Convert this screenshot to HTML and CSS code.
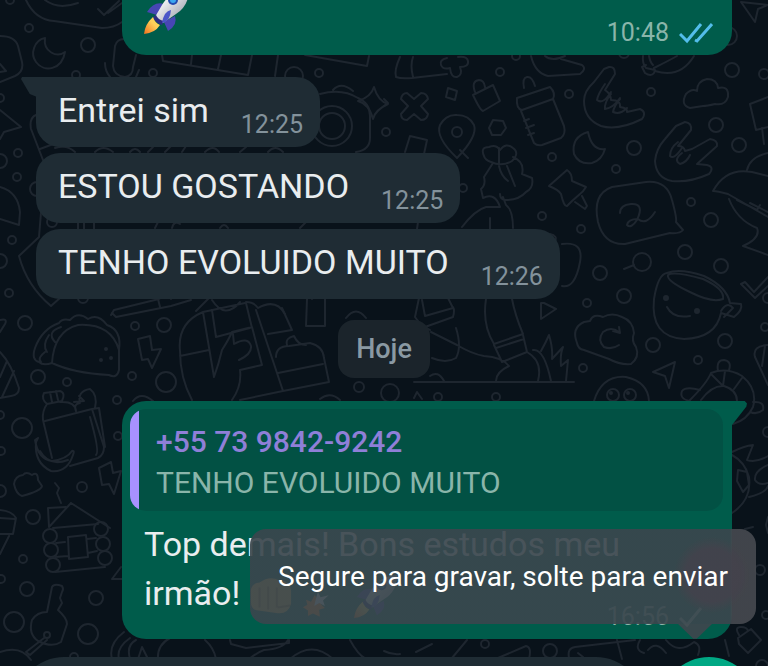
FILE: index.html
```
<!DOCTYPE html>
<html lang="pt-BR">
<head>
    <meta charset="utf-8">
    <meta name="viewport" content="width=device-width, initial-scale=1.0">
    <title>Conversa</title>
    <link rel="stylesheet" href="styles.css">
</head>
<body>
    <!-- Doodle wallpaper -->
    <svg class="wallpaper" width="768" height="666" viewBox="0 0 768 666" aria-hidden="true">
        <!-- loose circles -->
        <g>
            <circle cx="29" cy="28" r="4"/><circle cx="10" cy="0" r="4"/><circle cx="88" cy="45" r="7"/><circle cx="76" cy="75" r="4"/>
            <circle cx="153" cy="73" r="4"/><circle cx="0" cy="98" r="4"/><circle cx="18" cy="153" r="4"/><circle cx="0" cy="161" r="7"/>
            <circle cx="17" cy="177" r="4"/><circle cx="37" cy="189" r="7"/><circle cx="12" cy="240" r="4"/><circle cx="0" cy="261" r="7"/>
            <circle cx="9" cy="293" r="4"/><circle cx="52" cy="222" r="5"/><circle cx="83" cy="298" r="5"/><circle cx="25" cy="323" r="7"/>
            <circle cx="135" cy="326" r="4"/><circle cx="164" cy="325" r="7"/><circle cx="38" cy="377" r="7"/><circle cx="67" cy="382" r="4"/>
            <circle cx="132" cy="376" r="4"/><circle cx="166" cy="382" r="10"/><circle cx="117" cy="400" r="4"/><circle cx="22" cy="428" r="10"/>
            <circle cx="118" cy="436" r="4"/><circle cx="0" cy="415" r="4"/><circle cx="1" cy="451" r="4"/><circle cx="0" cy="491" r="6"/>
            <circle cx="82" cy="487" r="5"/><circle cx="33" cy="517" r="7"/><circle cx="23" cy="559" r="4"/><circle cx="1" cy="579" r="4"/>
            <circle cx="27" cy="589" r="7"/><circle cx="96" cy="598" r="7"/><circle cx="14" cy="622" r="10"/><circle cx="88" cy="634" r="10"/>
            <circle cx="74" cy="657" r="4"/><circle cx="294" cy="76" r="9"/><circle cx="319" cy="73" r="4"/>
            <circle cx="386" cy="132" r="4"/><circle cx="500" cy="72" r="4"/><circle cx="516" cy="56" r="4"/><circle cx="569" cy="94" r="4"/>
            <circle cx="651" cy="92" r="4"/><circle cx="732" cy="70" r="7"/><circle cx="764" cy="74" r="5"/><circle cx="716" cy="125" r="7"/>
            <circle cx="739" cy="145" r="7"/><circle cx="634" cy="148" r="7"/><circle cx="624" cy="53" r="5"/><circle cx="728" cy="36" r="9"/>
            <circle cx="552" cy="157" r="4"/><circle cx="616" cy="169" r="4"/><circle cx="542" cy="216" r="4"/><circle cx="581" cy="229" r="4"/>
            <circle cx="691" cy="202" r="4"/><circle cx="711" cy="220" r="7"/><circle cx="685" cy="252" r="7"/><circle cx="721" cy="266" r="7"/>
            <circle cx="600" cy="273" r="7"/><circle cx="624" cy="296" r="7"/><circle cx="587" cy="303" r="4"/><circle cx="642" cy="262" r="9"/>
            <circle cx="463" cy="188" r="4"/><circle cx="768" cy="298" r="5"/><circle cx="583" cy="368" r="4"/><circle cx="653" cy="345" r="7"/>
            <circle cx="725" cy="341" r="7"/><circle cx="698" cy="360" r="4"/><circle cx="765" cy="327" r="4"/>
            <circle cx="438" cy="397" r="4"/><circle cx="496" cy="397" r="4"/><circle cx="390" cy="393" r="9"/>
            <circle cx="768" cy="432" r="5"/><circle cx="760" cy="570" r="5"/><circle cx="766" cy="615" r="4"/><circle cx="485" cy="644" r="4"/>
            <circle cx="550" cy="651" r="7"/><circle cx="762" cy="666" r="6"/><circle cx="359" cy="387" r="5"/>
        </g>
        <!-- top left: bubble, moon, microphone -->
        <path d="M26 0C32 13 41 20 54 21L102 28Q114 28 122 22M45 0Q58 10 78 3M98 9l6 6 15-14M108 13l14-10"/>
        <path d="M45 38C34 40 30 54 36 62C44 73 62 70 65 52C57 58 43 52 45 38Z"/>
        <path d="M0 36Q15 36 18 46L22 62Q24 72 15 76L0 82M0 64l6 7-6 1M115 46Q117 39 124 39M115 46l-2 20q1 10 12 11q8-1 8-10l3-12M105 63q0 8 5 14M139 70l-3 7"/>
        <path d="M0 110L21 127L4 132L0 139M0 187Q18 192 20 212L19 225L0 219"/>
        <path d="M36 115Q29 118 31 129L43 160M40 149l16-6M42 200L39 237L19 256Q27 286 51 306L61 297"/>
        <!-- keyboard strip and camera -->
        <path d="M162 55l1 6 85 14 4-20M192 55l-1 9M221 55l-3 14M278 55l-3 21M305 55l62 11 2-10M320 94q22-6 38 4q12 5 12 18v22q0 12-14 14M333 90q8-9 20 1"/>
        <circle cx="332" cy="126" r="20"/><circle cx="332" cy="126" r="13"/>
        <path d="M374 87q4 14 14 17q-13 6-15 15q-4-15-15-18q13-4 16-14Z"/>
        <path d="M384 106l4-3-4-4"/>
        <!-- gaps between the incoming bubbles -->
        <path d="M55 148q12-4 20 4M95 152q8-8 18 0M130 152q5-6 10 0M148 152l5-5M165 152l6-6M182 152l4-6M205 152q8-8 14 0M240 152l6-5M268 152q7-8 15 0M78 222v7M84 222v7M94 222v7M155 228l3-6M172 228q2-8 8-4M220 228q4-6 8 0M300 228l6-6M418 222l-1 7"/>
        <!-- shoe, cross, lock, bottle -->
        <path d="M400 57Q394 70 396 77Q401 79 412 78L447 74M413 57q-3 8 0 20M447 58q-8 2-6 7q2 5 9 3q1 10 7 9q6-2 3-10q9 0 8-6q-1-5-10-4"/>
        <path d="M407 93L414 99L421 93Q427 93 428 99L421 106L428 114Q427 120 421 120L414 114L407 120Q401 120 401 114L408 106L401 99Q402 93 407 93Z"/>
        <path d="M448 88l9 3-2 9-9-3ZM473 95l20-10 7 16-17 10q-3-1-10-16ZM475 92q-4-11 4-12q5 0 6 7"/>
        <path d="M524 88q-2-10 3-11q5-1 8 9M517 98L550 87Q556 93 553 99L522 110Q516 109 517 98ZM521 111L534 143Q537 146 542 145L561 138Q566 134 564 126L553 99M524 121l5-2M526 128l8-3M528 135l6-2"/>
        <path d="M531 56Q535 73 548 76L580 74Q587 69 582 65L561 59M545 56q7 6 20 0"/>
        <!-- pin, nut, hands, moon, cloud -->
        <path d="M457 158Q435 137 440 125Q446 114 457 115Q469 115 474 125Q478 136 457 158Z"/><circle cx="457" cy="132" r="5"/>
        <path d="M493 120l10 1 3 7-5 7h-9l-3-7ZM410 136l17 4-3 14M410 136l-5 16"/>
        <path d="M609 67Q615 66 615 74L605 90Q611 94 611 100Q621 100 620 107Q628 108 627 112L640 109Q647 112 642 119Q618 131 601 126Q584 119 584 101Q584 91 594 82L604 69ZM605 84Q598 94 597 100Q603 105 611 92M611 94Q604 103 605 109Q613 108 620 98M620 99Q614 106 613 112Q620 115 627 108"/>
        <path d="M685 122Q692 123 691 130L678 146Q684 146 685 151L692 149L710 139Q718 140 717 146L697 164L707 165Q715 167 709 174Q689 183 672 181Q656 178 655 161Q656 149 665 139L676 126ZM678 142Q670 148 670 156Q674 160 682 148M682 153q-9 7-2 11q7-2 10-9"/>
        <path d="M588 132Q571 137 574 154Q579 165 592 163Q602 160 605 149Q592 151 588 132Z"/>
        <path d="M643 56Q642 63 646 68L655 70L654 73Q651 77 645 73L642 67L646 65M649 56q1 6 4 9M654 68Q670 60 677 56M655 71Q680 79 694 56"/>
        <path d="M690 108Q680 105 686 94Q692 88 697 91Q697 81 707 79Q717 79 718 88Q729 85 728 97Q725 106 715 104Q707 106 703 106Z"/>
        <path d="M741 2L768 5L758 9L755 22ZM768 97L750 104L756 130L768 127M762 128l2 16"/>
        <!-- woman -->
        <path d="M484 156Q480 147 489 147Q496 144 500 150Q506 142 513 148Q520 153 512 161Q502 167 491 162Q485 160 484 156ZM499 148v15M513 157Q525 162 522 174L532 178Q534 188 526 192Q519 200 506 200Q500 200 500 194M493 163L484 177Q486 185 481 189L483 198Q495 192 500 207H486Q475 210 462 227M499 166q2 10 9 15M507 166l8 20M503 197l3 8Q513 210 513 228M490 218v12M550 234q8 2 5 7M562 244Q584 241 580 262Q575 289 562 286M460 150l8 8"/>
        <!-- pushpin, speech bubble, mushroom -->
        <path d="M567 170L549 186Q559 190 561 194Q564 207 567 206L572 201L580 194Q583 192 586 187L572 181Q572 173 567 170ZM575 202l10 7 2-3-5-10"/>
        <path d="M612 187L646 182Q667 180 672 200Q677 218 676 222L683 230Q680 234 670 233L625 244Q604 245 598 222Q592 194 612 187ZM620 213Q620 205 631 204Q645 203 637 220Q631 229 627 225Q628 219 638 219Q646 226 655 212"/>
        <path d="M713 191Q726 167 752 172L768 176M713 191Q717 191 728 194L768 217M747 170Q750 157 768 153M729 199Q737 220 757 228Q761 238 743 246L768 255M737 200l20 10 3-5M750 203l18 9M624 269l10-4"/>
        <!-- smiling cup, tick -->
        <path d="M668 275Q674 271 703 279Q725 289 723 299Q712 303 692 293Q666 281 668 275ZM667 273Q658 274 654 299Q650 337 684 339Q716 338 721 313L734 317Q743 310 741 304L730 303M667 273Q680 268 704 276Q727 287 730 303M721 311Q727 301 733 308L724 317M667 307Q673 319 690 316"/>
        <circle class="dot" cx="666" cy="298" r="2"/><circle class="dot" cx="697" cy="311" r="2"/>
        <path d="M741 284l4-2 9 10 14-15M741 284l14 14 13-12M541 303l3 0 12 6-15 10Z"/>
        <!-- taco and rocket corner -->
        <path d="M39 362Q31 360 35 348Q42 329 59 323Q62 318 70 320Q78 311 88 319Q98 313 107 325Q122 330 119 350L119 370Q117 379 109 375Q73 373 52 363Q43 366 39 362ZM52 363Q54 331 78 325Q111 323 119 350M55 342q-9-10 6-15M49 335q-7 10-2 17M45 352q-8 6-4 10"/>
        <circle class="dot" cx="106" cy="349" r="1"/><circle class="dot" cx="101" cy="360" r="1"/><circle class="dot" cx="111" cy="358" r="1"/>
        <path d="M0 320q8-2 5 4L0 332M0 352Q11 363 19 388Q19 395 11 396L0 398M7 361L0 377M14 371L2 397M111 315l3-5 45-11q10-7 12 0M112 313l4 4 55-11 20-6M158 299l2 8"/>
        <path d="M138 339l12-3 2 14 9-1-9 19-4-9-6 1Z"/>
        <!-- penguin and boxes -->
        <path d="M192 400Q180 378 180 351Q177 323 203 312L245 303M203 312L214 377Q219 363 222 350Q229 339 232 332L252 327L262 365L240 370Q242 386 232 400M180 356L209 350M212 310L216 337L246 329L250 328M212 300Q225 320 240 302M233 334l1 10Q248 336 251 346Q252 354 239 360M246 303l6 25M256 310L283 391L240 400M282 308L292 330L268 334M276 357Q276 346 289 346L310 343Q323 346 324 358L329 382L283 391M278 373L323 364M287 345Q285 338 294 336Q298 345 306 345M307 299l-1 27h19v-27M312 299v-6M346 318q10-13 20 0"/>
        <path d="M320 399q10-8 20 1M133 401q8-10 20 0M246 302q8 0 12 6q18-10 27 6M196 311l14-14"/>
        <!-- walking legs, grass, cloud -->
        <path d="M419 298L415 317L421 325L430 330M422 300l3 16 28-8-5-10M425 327l28-10q2-7 0-10M456 328Q462 347 456 358Q446 364 432 358M431 332l26 13Q472 354 484 356Q502 357 509 366Q496 372 496 381M486 299Q482 325 494 344L523 334Q515 315 512 299M494 345l8 17 25-10-4-17M496 348l28-9M527 352Q543 361 538 381M533 350Q544 348 551 381M541 351Q546 342 549 335Q553 348 552 359L563 347Q560 354 561 366L568 360L566 381M414 382H574M430 376Q438 370 444 381M414 398l3-6 5 7"/>
        <path d="M577 343Q571 328 584 322L590 321Q593 313 603 317Q612 312 622 317Q633 321 634 333Q631 341 636 347Q640 357 631 364Q620 365 609 359L584 350Q578 349 577 343ZM619 332Q611 326 603 332Q597 340 604 347Q612 350 619 345M613 331l7 2-1-6"/>
        <path d="M675 362L653 372L665 376L669 388ZM594 401Q602 375 626 377Q648 382 649 401"/>
        <circle cx="613" cy="395" r="6"/><circle cx="630" cy="395" r="6"/><circle class="dot" cx="611" cy="393" r="1"/><circle class="dot" cx="628" cy="393" r="1"/>
        <!-- turtle, cone and ball on the right -->
        <path d="M690 400Q707 383 711 373Q727 367 742 376Q758 389 753 407Q747 420 733 424M701 400Q712 385 724 386Q737 390 737 401M711 374l12 12M725 371l-2 15M742 378l-8 11M718 371Q716 360 724 360Q732 361 729 370M690 401Q679 399 682 391Q686 386 700 390M753 402Q765 401 763 410Q757 415 750 412M768 345Q752 346 755 357L768 385M765 346l-3 20"/>
        <path d="M732 452Q744 446 753 445L747 460Q756 463 768 456M732 455Q745 462 749 477Q752 500 732 513M738 470l9 2 2 13-6 7-6-11ZM749 497Q766 493 768 486M768 465Q754 471 755 480Q759 486 768 483M745 529l8-2M768 517l-2 8 2 8"/>
        <!-- bag, banana, toast -->
        <path d="M44 393Q41 399 47 404L62 401Q66 393 60 391ZM50 392l2 10M56 391l2 9M47 404Q42 411 43 420L52 458M45 421L92 409L104 447Q104 455 98 458L70 466M76 411Q75 401 60 402M76 411Q73 404 80 403Q77 391 90 389Q98 395 95 408M74 402l10-1M79 396l5 5M92 409l7-1 6 39M90 417Q100 452 96 455"/>
        <path d="M38 438l-3 2Q38 459 52 461Q67 459 72 451Q75 450 73 455Q67 473 51 471Q34 463 36 442ZM40 451Q49 467 68 460"/>
        <path d="M14 484Q15 476 23 475Q26 471 32 475Q38 471 38 480L42 486Q41 491 22 496Q16 494 14 484ZM55 483l4 5-2 5 4 10M99 468l12-6 2 11 8-2-7 23-5-10-7 1Z"/>
        <!-- cabin -->
        <path d="M71 503L49 527L48 508L66 507M71 503L110 528M53 528L98 524M56 543L65 542M55 557L68 556M87 539L96 538M88 553L97 551M55 572L105 567M68 537L86 535L88 557L69 559Z"/>
        <circle cx="50" cy="536" r="7"/><circle cx="51" cy="550" r="7"/><circle cx="53" cy="565" r="7"/><circle cx="101" cy="529" r="7"/><circle cx="103" cy="544" r="7"/><circle cx="105" cy="558" r="7"/>
        <path d="M0 510Q12 511 16 518L13 534L0 534M0 518L15 519M9 536L0 554M121 567L112 579H122"/>
        <!-- key and the bottom edge -->
        <path d="M47 612L52 587Q54 583 62 586Q64 589 62 592L60 598L62 603L58 610Q67 618 67 624L61 642Q52 648 38 641Q28 634 32 620Q37 612 47 612Z"/><circle cx="47" cy="635" r="3"/>
        <path d="M44 638L26 652L30 655L47 640M0 652Q21 645 31 660M112 659Q108 644 124 632M119 659Q116 648 130 638M130 659Q126 645 136 640M138 659l4-12 6 12M158 659Q157 645 170 638M205 640Q214 648 216 659M230 640l1 4 15 4 43-5V640M249 659Q258 652 264 650Q283 649 288 640M290 659Q312 640 333 659M350 640Q358 655 366 659M384 651q8 4 16 3M416 652l16-8M452 658L467 640M498 658L526 646Q532 647 529 659M569 658Q567 648 575 647L635 640M578 653l5 4M617 640l5 19M640 640Q634 650 644 653M666 640Q678 655 694 642Q702 645 698 655M648 650Q656 640 666 653M725 640l4 16M738 638L751 629L761 640L748 653L739 644ZM739 635Q734 627 741 627Q747 627 748 631"/>
    </svg>

    <main class="chat">
        <article class="bubble sent sent-cut">
            <svg class="emoji emoji-cut" viewBox="0 12 46 34" role="img" aria-label="foguete">
                <use href="#rocket"/>
            </svg>
            <div class="meta">
                <time>10:48</time>
                <svg class="ticks read" viewBox="0 0 34 22" aria-hidden="true"><path d="M1 12l7 7L22 2M16 18l2 1L33 2"/></svg>
            </div>
        </article>

        <article class="bubble received first">
            <p>Entrei sim</p>
            <time>12:25</time>
        </article>
        <article class="bubble received">
            <p>ESTOU GOSTANDO</p>
            <time>12:25</time>
        </article>
        <article class="bubble received">
            <p>TENHO EVOLUIDO MUITO</p>
            <time>12:26</time>
        </article>

        <div class="day">Hoje</div>

        <article class="bubble sent tail">
            <blockquote class="quote">
                <strong>+55 73 9842-9242</strong>
                <span>TENHO EVOLUIDO MUITO</span>
            </blockquote>
            <p class="message">Top demais! Bons estudos meu irmão!
                <svg class="emoji" viewBox="0 0 46 46" role="img" aria-label="soco">
                    <path fill="#e0ae50" d="M2 16Q4 9 11 9Q22 1 32 7Q42 6 44 17V31Q41 42 30 41L8 38Q2 37 2 29Z"/>
                    <path fill="none" stroke="#a0702a" stroke-width="2" d="M11 14v21M20 13v24M29 14v21M30 35l13-2"/>
                </svg>
                <svg class="emoji" viewBox="0 -24 70 70" role="img" aria-label="batida">
                    <path fill="#f47b20" d="M3 29l7-4-2-8 8 3 6-11 5 9 11-6-6 12 6 6-9 3 1 11-11-5-8 4 0-9Z"/>
                    <path fill="#e9eef5" d="M27 4l4 9 13-3-9 8 3 9-9-5-8 5 2-9Z"/>
                </svg>
                <svg class="emoji" viewBox="0 0 46 46" role="img" aria-label="foguete">
                    <use href="#rocket"/>
                </svg>
            </p>
            <div class="meta">
                <time>16:56</time>
                <svg class="ticks" viewBox="0 0 34 22" aria-hidden="true"><path d="M1 12l7 7L22 2"/></svg>
            </div>
        </article>
    </main>

    <form class="composer">
        <input class="composer-input" type="text" aria-label="Mensagem">
        <button class="mic" type="button" aria-label="Gravar" aria-describedby="mic-tip"></button>
        <div class="tooltip" id="mic-tip" role="tooltip">Segure para gravar, solte para enviar</div>
    </form>

    <svg class="symbols" aria-hidden="true">
        <defs>
            <linearGradient id="hull" x1="0" y1="0" x2="1" y2="1">
                <stop offset="0.3" stop-color="#f1f2f5"/>
                <stop offset="0.8" stop-color="#a6a8b3"/>
            </linearGradient>
            <linearGradient id="flame" x1="0" y1="1" x2="1" y2="0">
                <stop offset="0" stop-color="#f2701d"/>
                <stop offset="0.6" stop-color="#ffd05a"/>
            </linearGradient>
            <g id="rocket">
                <path fill="#4746b4" d="M20 16Q10 13 3 24L13 27ZM31 28Q34 37 24 43L20 34Z"/>
                <path fill="url(#hull)" d="M45 1Q27 2 18 17L11 29Q14 33 19 35L32 26Q45 18 45 1Z"/>
                <path fill="#2e2d83" d="M12 27Q14 32 20 33L18 37Q11 35 9 29Z"/>
                <path fill="url(#flame)" d="M9 29Q11 35 16 37Q11 45 0 46Q1 36 9 29Z"/>
                <circle cx="29" cy="12" r="5" fill="#244bb0"/>
                <circle cx="29" cy="12" r="3" fill="#3ba7f0"/>
                <path fill="#4a55c8" d="M27 22Q20 23 18 35Q26 34 27 22Z"/>
            </g>
        </defs>
    </svg>
</body>
</html>
```
FILE: styles.css
```
* {
    box-sizing: border-box;
}

body {
    margin: 0;
    height: 100vh;
    overflow: hidden;
    position: relative;
    background-color: #09121a;
    color: #e9edef;
    font-family: Roboto, "Liberation Sans", sans-serif;
    font-size: 34px;
}

p,
blockquote {
    margin: 0;
}

.wallpaper {
    position: absolute;
    top: 0;
    left: 0;
    fill: none;
    stroke: #1e262f;
    stroke-width: 2;
    stroke-linecap: round;
    stroke-linejoin: round;
}

.wallpaper .dot {
    fill: #1e262f;
}

.symbols {
    position: absolute;
    width: 0;
    height: 0;
}

/* Messages */
.chat {
    position: relative;
    display: flex;
    flex-direction: column;
    align-items: flex-start;
    gap: 6px;
}

.bubble {
    position: relative;
    border-radius: 24px;
}

.received {
    display: flex;
    align-items: flex-end;
    gap: 32px;
    margin-left: 36px;
    padding: 13px 17px 7px 22px;
    background-color: #1f2c34;
}

.received p {
    margin-bottom: 10px;
    line-height: 40px;
}

.received.first {
    margin-top: 16px;
    border-top-left-radius: 0;
}

.received.first::before {
    content: "";
    position: absolute;
    top: 0;
    left: -15px;
    width: 16px;
    height: 20px;
    background-color: #1f2c34;
    clip-path: polygon(6% 0, 100% 0, 100% 100%, 55% 85%, 0 10%);
}

time {
    color: #83929b;
    font-size: 25px;
    line-height: 30px;
}

.sent {
    align-self: stretch;
    margin: 0 36px 0 122px;
    padding: 8px 9px 7px 8px;
    background-color: #005c4b;
}

.sent time {
    color: #8ab5aa;
}

.sent-cut {
    display: flex;
    justify-content: space-between;
    align-items: flex-start;
    padding: 0 9px 7px 22px;
    border-radius: 0 0 24px 24px;
}

.sent-cut .meta {
    margin-top: 18px;
}

.tail {
    border-top-right-radius: 0;
}

.tail::before {
    content: "";
    position: absolute;
    top: 0;
    left: 100%;
    width: 15px;
    height: 24px;
    background-color: #005c4b;
    clip-path: polygon(0 0, 85% 0, 100% 10%, 95% 24%, 0 100%);
}

.meta {
    display: flex;
    justify-content: flex-end;
    align-items: center;
    gap: 10px;
    padding-right: 10px;
}

.ticks {
    width: 34px;
    height: 22px;
    fill: none;
    stroke: #8ab5aa;
    stroke-width: 3;
}

.ticks.read {
    stroke: #53bdeb;
}

.emoji {
    width: 44px;
    height: 44px;
    vertical-align: middle;
}

.emoji-cut {
    width: 46px;
    height: 34px;
}

.quote {
    display: flex;
    flex-direction: column;
    padding: 12px 18px 8px 26px;
    border-radius: 16px;
    background: linear-gradient(to right, #a791ff 9px, #025144 9px);
    font-size: 30px;
    line-height: 41px;
}

.quote strong {
    color: #8f7fd8;
    font-weight: 500;
}

.quote span {
    color: #8ab5aa;
}

.message {
    margin-top: 9px;
    padding: 0 14px;
    line-height: 49px;
}

.message + .meta {
    margin-top: -16px;
}

.day {
    align-self: center;
    margin: 15px 0 17px;
    padding: 14px 18px;
    border-radius: 16px;
    background-color: #1b242b;
    color: #8a99a3;
    font-size: 27px;
    font-weight: 500;
    line-height: 30px;
}

/* Message box */
.composer {
    position: relative;
    display: flex;
    gap: 17px;
    margin-top: 18px;
    padding: 0 11px 0 16px;
}

.composer-input {
    flex: 1;
    min-width: 0;
    height: 96px;
    padding: 0 48px;
    border: 0;
    border-radius: 48px;
    background-color: #1f2c34;
    color: #e9edef;
    font: inherit;
}

.mic {
    width: 96px;
    height: 96px;
    border: 0;
    border-radius: 50%;
    background-color: #00a884;
}

.tooltip {
    position: absolute;
    right: 12px;
    bottom: calc(100% + 33px);
    padding: 28px 28px 27px;
    border-radius: 16px;
    background:
        radial-gradient(circle 38px at calc(100% - 44px) 46px, rgba(68, 66, 76, 0.8) 70%, transparent),
        linear-gradient(to left, rgba(70, 73, 79, 0.92) 24px, rgba(58, 70, 77, 0.92) 26px);
    color: #fff;
    font-size: 28px;
    line-height: 40px;
    white-space: nowrap;
}

.tooltip::after {
    content: "";
    position: absolute;
    top: 100%;
    right: 44px;
    width: 34px;
    height: 16px;
    background-color: rgba(62, 71, 77, 0.92);
    clip-path: polygon(0 0, 100% 0, 55% 92%, 45% 92%);
}
```
